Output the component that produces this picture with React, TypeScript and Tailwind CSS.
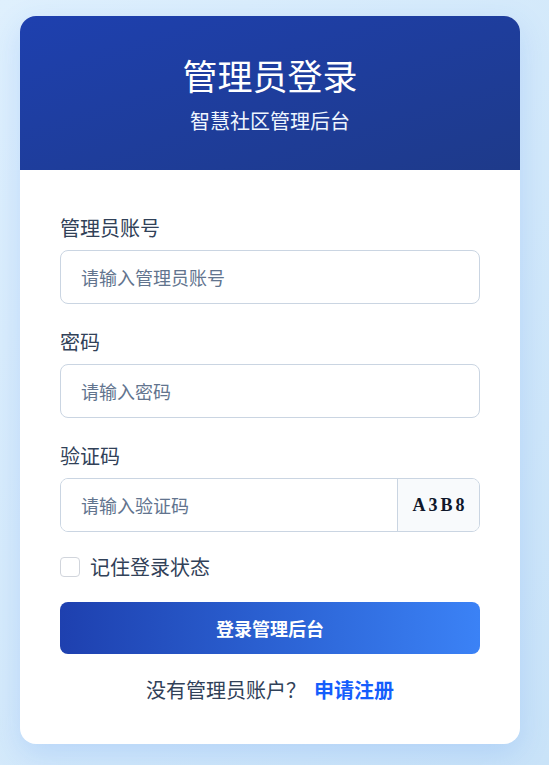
import React, { useState } from 'react';

const font = { fontFamily: '"Noto Sans CJK SC", "Noto Sans", sans-serif' };

const Field: React.FC<{ label: string; placeholder: string; type?: string }> = ({ label, placeholder, type = 'text' }) => (
  <div className="mb-6">
    <label className="mb-2 block text-[20px] leading-[28px] text-slate-700">{label}</label>
    <input
      type={type}
      placeholder={placeholder}
      className="h-[54px] w-full rounded-lg border border-slate-300 bg-white px-5 text-[18px] text-slate-800 outline-none placeholder:text-slate-500"
    />
  </div>
);

export default function App() {
  const [remember, setRemember] = useState(false);

  return (
    <div className="min-h-[765px] bg-gradient-to-br from-[#dff0fd] to-[#c9e3f8] pl-5 pt-4" style={font}>
      <div className="w-[500px] overflow-hidden rounded-2xl bg-white shadow-[0_10px_30px_rgba(59,130,246,0.18)]">
        <div className="flex h-[154px] flex-col items-center justify-center bg-gradient-to-br from-[#1e40af] to-[#1e3a8a] text-white">
          <h1 className="text-[35px] font-normal leading-[48px]">管理员登录</h1>
          <p className="mt-2 text-[20px] leading-[28px] text-blue-50">智慧社区管理后台</p>
        </div>

        <div className="px-10 pb-10 pt-[44px]">
          <Field label="管理员账号" placeholder="请输入管理员账号" />
          <Field label="密码" placeholder="请输入密码" type="password" />

          <div className="mb-[25px]">
            <label className="mb-2 block text-[20px] leading-[28px] text-slate-700">验证码</label>
            <div className="flex h-[54px] overflow-hidden rounded-lg border border-slate-300">
              <input
                placeholder="请输入验证码"
                className="min-w-0 flex-1 bg-white px-5 text-[18px] text-slate-800 outline-none placeholder:text-slate-500"
              />
              <div
                className="flex w-[82px] items-center justify-center border-l border-slate-300 bg-slate-50 pl-[3px] text-[18px] font-bold tracking-[3px] text-slate-900"
                style={{ fontFamily: '"Liberation Serif", serif' }}
              >
                A3B8
              </div>
            </div>
          </div>

          <label className="mb-[25px] flex h-5 items-center gap-[10px] text-[20px] text-slate-700">
            <input
              type="checkbox"
              checked={remember}
              onChange={(e) => setRemember(e.target.checked)}
              className="h-5 w-5 appearance-none rounded border border-gray-300 bg-white"
            />
            记住登录状态
          </label>

          <button className="h-[52px] w-full rounded-lg bg-gradient-to-r from-[#1e40af] to-[#3b82f6] text-[18px] font-bold text-white">
            登录管理后台
          </button>

          <p className="mt-[22px] text-center text-[20px] leading-[28px] text-slate-700">
            没有管理员账户？
            <a href="#" className="ml-2 font-bold text-blue-600">申请注册</a>
          </p>
        </div>
      </div>
    </div>
  );
}
